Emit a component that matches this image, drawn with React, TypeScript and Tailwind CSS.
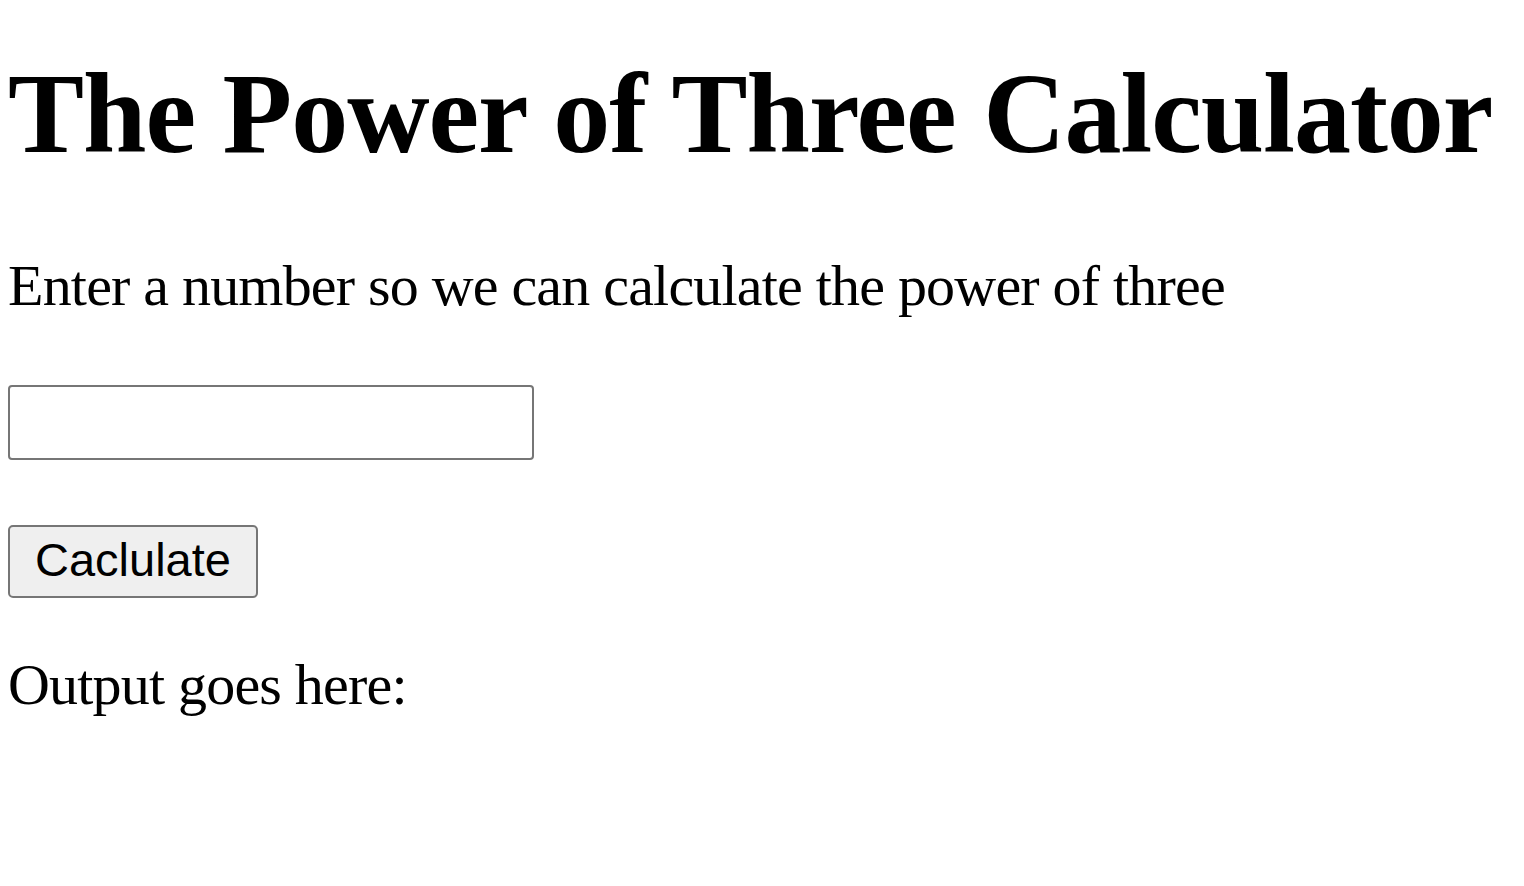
export default function App() {
  return (
    <div className="h-screen overflow-hidden bg-white px-[8px] pt-[48px] text-black font-['Liberation_Serif','Times_New_Roman',serif]">
      <h1 className="text-[114px] font-bold leading-[1.15] tracking-[-1px] whitespace-nowrap">
        The Power of Three Calculator
      </h1>
      <p className="mt-[74px] text-[58px] leading-[1.15] tracking-[-0.8px]">
        Enter a number so we can calculate the power of three
      </p>
      <input
        type="text"
        className="mt-[65px] block h-[75px] w-[526px] rounded-[4px] border-2 border-[#767676] bg-white px-2"
      />
      <button className="mt-[65px] block h-[73px] w-[250px] rounded-[5px] border-2 border-[#767676] bg-[#efefef] pb-[3px] text-[47px] leading-none font-['Liberation_Sans',Arial,sans-serif]">
        Caclulate
      </button>
      <p className="mt-[54px] text-[58px] leading-[1.15] tracking-[-0.8px]">Output goes here:</p>
    </div>
  );
}
